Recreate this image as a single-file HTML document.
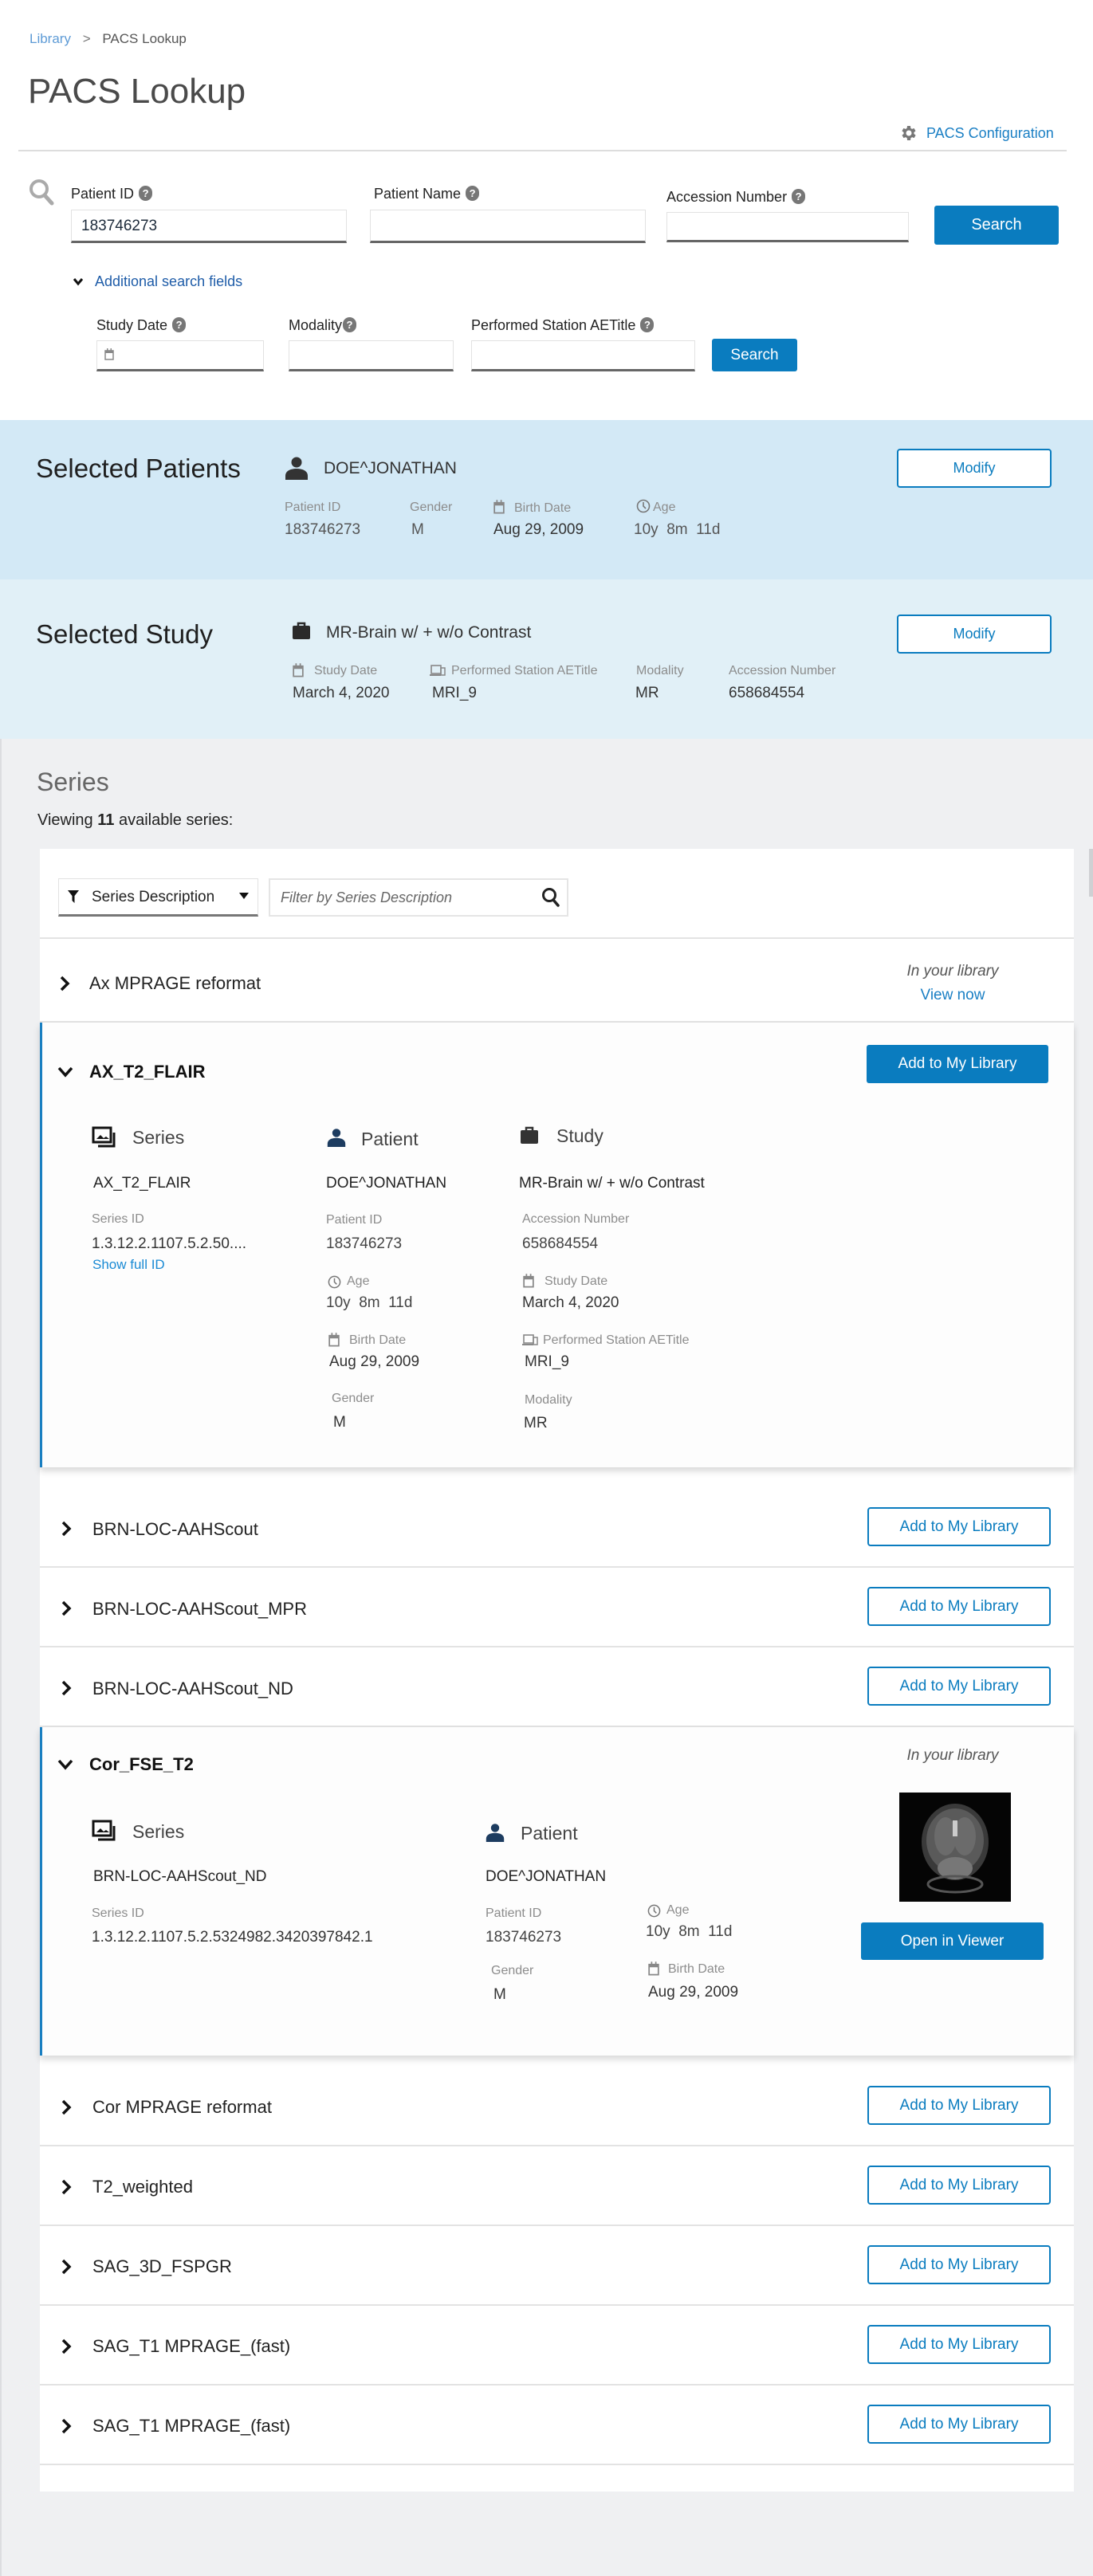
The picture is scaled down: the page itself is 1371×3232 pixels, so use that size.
<!DOCTYPE html>
<html><head><meta charset="utf-8">
<style>
*{box-sizing:border-box;margin:0;padding:0}
body{width:1371px;height:3232px;position:relative;background:#fff;font-family:"Liberation Sans",sans-serif;color:#222;overflow:hidden}
.a{position:absolute;white-space:nowrap}
.inp{position:absolute;background:#fff;border:1px solid #e2e2e2;border-bottom:3px solid #666}
.btn{position:absolute;background:#0a7cbf;color:#fff;border-radius:3px;font-size:19px;display:flex;align-items:center;justify-content:center}
.obtn{position:absolute;background:#fff;color:#0a7cbf;border:2px solid #0a7cbf;border-radius:4px;font-size:19px;display:flex;align-items:center;justify-content:center}
.lbl{font-size:16px;color:#8c8c8c;line-height:20px}
.val{font-size:19px;color:#333;line-height:22px}
.q{display:inline-block;width:17px;height:19px;border-radius:9px;background:#777;color:#fff;font-size:13px;font-weight:bold;text-align:center;line-height:19px;vertical-align:2px;margin-left:6px}
.sep{position:absolute;left:50px;width:1297px;height:2px;background:#e3e3e3}
.rt{font-size:22px;color:#222;line-height:26px}
</style></head><body>

<!-- header -->
<div class="a" style="left:37px;top:39px;font-size:17px;line-height:20px;color:#5e9bd6">Library <span style="color:#777;margin:0 10px">&gt;</span> <span style="color:#555">PACS Lookup</span></div>
<div class="a" style="left:35px;top:88px;font-size:44px;line-height:54px;color:#4a4a4a">PACS Lookup</div>
<svg class="a" style="left:1127px;top:155px" width="24" height="24" viewBox="0 0 24 24"><path fill="#777" d="M19.4 13a7.5 7.5 0 000-2l2.1-1.6-2-3.5-2.5 1a7 7 0 00-1.7-1L15 3h-4l-.4 2.9a7 7 0 00-1.7 1l-2.5-1-2 3.5L6.6 11a7.5 7.5 0 000 2l-2.1 1.6 2 3.5 2.5-1a7 7 0 001.7 1L11 21h4l.4-2.9a7 7 0 001.7-1l2.5 1 2-3.5zM13 15.5A3.5 3.5 0 1113 8.5a3.5 3.5 0 010 7z"/></svg>
<div class="a" style="left:1162px;top:156px;font-size:18px;line-height:22px;color:#1a7fc4">PACS Configuration</div>
<div class="a" style="left:23px;top:188px;width:1315px;height:2px;background:#ddd"></div>

<!-- search row -->
<svg class="a" style="left:35px;top:224px" width="34" height="34" viewBox="0 0 34 34"><circle cx="14" cy="13" r="10" fill="none" stroke="#aaa" stroke-width="4"/><path d="M21 21l9 10" stroke="#aaa" stroke-width="5" stroke-linecap="round"/></svg>
<div class="a" style="left:89px;top:231px;font-size:18px;line-height:24px">Patient ID<span class="q">?</span></div>
<div class="a" style="left:469px;top:231px;font-size:18px;line-height:24px">Patient Name<span class="q">?</span></div>
<div class="a" style="left:836px;top:235px;font-size:18px;line-height:24px">Accession Number<span class="q">?</span></div>
<div class="inp" style="left:89px;top:263px;width:346px;height:42px"><span class="a" style="left:12px;top:9px;font-size:19px;color:#1c2a3a">183746273</span></div>
<div class="inp" style="left:464px;top:263px;width:346px;height:42px"></div>
<div class="inp" style="left:836px;top:266px;width:304px;height:38px"></div>
<div class="btn" style="left:1172px;top:258px;width:156px;height:49px;font-size:20px">Search</div>

<svg class="a" style="left:91px;top:347px" width="14" height="12" viewBox="0 0 14 12"><path d="M2 3l5 6 5-6" fill="none" stroke="#111" stroke-width="3"/></svg>
<div class="a" style="left:119px;top:342px;font-size:18px;line-height:22px;color:#1e5ca8">Additional search fields</div>

<div class="a" style="left:121px;top:396px;font-size:18px;line-height:24px">Study Date<span class="q">?</span></div>
<div class="a" style="left:362px;top:396px;font-size:18px;line-height:24px">Modality<span class="q" style="margin-left:1px">?</span></div>
<div class="a" style="left:591px;top:396px;font-size:18px;line-height:24px">Performed Station AETitle<span class="q">?</span></div>
<div class="inp" style="left:121px;top:427px;width:210px;height:39px"><svg class="a" style="left:9px;top:9px" width="12" height="15" viewBox="0 0 12 15"><rect x="1" y="3" width="10" height="11" fill="none" stroke="#888" stroke-width="1.5"/><rect x="1" y="3" width="10" height="3" fill="#888"/><rect x="3" y="0" width="1.5" height="4" fill="#888"/><rect x="7.5" y="0" width="1.5" height="4" fill="#888"/></svg></div>
<div class="inp" style="left:362px;top:427px;width:207px;height:39px"></div>
<div class="inp" style="left:591px;top:427px;width:281px;height:39px"></div>
<div class="btn" style="left:893px;top:425px;width:107px;height:41px;font-size:19px">Search</div>

<!-- selected patients -->
<div class="a" style="left:0;top:527px;width:1371px;height:200px;background:#d3e9f6"></div>
<div class="a" style="left:45px;top:568px;font-size:33px;line-height:40px;color:#1f1f1f">Selected Patients</div>
<svg class="a" style="left:357px;top:572px" width="30" height="30" viewBox="0 0 30 30"><circle cx="15" cy="8" r="6.5" fill="#333"/><path d="M1 30v-5c0-6 6-9 14-9s14 3 14 9v5z" fill="#333"/></svg>
<div class="a" style="left:406px;top:575px;font-size:21px;line-height:26px;color:#333">DOE^JONATHAN</div>
<div class="a lbl" style="left:357px;top:627px">Patient ID</div>
<div class="a lbl" style="left:514px;top:627px">Gender</div>
<svg class="a" style="left:619px;top:627px" width="14" height="18" viewBox="0 0 12 15"><rect x="1" y="3" width="10" height="11" fill="none" stroke="#888" stroke-width="1.5"/><rect x="1" y="3" width="10" height="3" fill="#888"/><rect x="3" y="0" width="1.5" height="4" fill="#888"/><rect x="7.5" y="0" width="1.5" height="4" fill="#888"/></svg>
<div class="a lbl" style="left:645px;top:628px">Birth Date</div>
<svg class="a" style="left:798px;top:626px" width="18" height="18" viewBox="0 0 18 18"><circle cx="9" cy="9" r="7.5" fill="none" stroke="#777" stroke-width="1.6"/><path d="M9 4v5l3 3" fill="none" stroke="#777" stroke-width="1.6"/></svg>
<div class="a lbl" style="left:819px;top:627px">Age</div>
<div class="a val" style="left:357px;top:654px;color:#555">183746273</div>
<div class="a val" style="left:516px;top:654px;color:#555">M</div>
<div class="a val" style="left:619px;top:654px">Aug 29, 2009</div>
<div class="a val" style="left:795px;top:654px;color:#555">10y&nbsp; 8m&nbsp; 11d</div>
<div class="obtn" style="left:1125px;top:563px;width:194px;height:49px;font-size:18px">Modify</div>

<!-- selected study -->
<div class="a" style="left:0;top:727px;width:1371px;height:200px;background:#e1f0f7"></div>
<div class="a" style="left:45px;top:776px;font-size:33px;line-height:40px;color:#1f1f1f">Selected Study</div>
<svg class="a" style="left:366px;top:779px" width="24" height="24" viewBox="0 0 24 24"><rect x="1" y="6" width="22" height="17" rx="2" fill="#2a2a2a"/><path d="M8 6V3h8v3" fill="none" stroke="#2a2a2a" stroke-width="2.5"/></svg>
<div class="a" style="left:409px;top:781px;font-size:21px;line-height:26px;color:#333">MR-Brain w/ + w/o Contrast</div>
<svg class="a" style="left:367px;top:832px" width="14" height="18" viewBox="0 0 12 15"><rect x="1" y="3" width="10" height="11" fill="none" stroke="#888" stroke-width="1.5"/><rect x="1" y="3" width="10" height="3" fill="#888"/><rect x="3" y="0" width="1.5" height="4" fill="#888"/><rect x="7.5" y="0" width="1.5" height="4" fill="#888"/></svg>
<div class="a lbl" style="left:394px;top:832px">Study Date</div>
<svg class="a" style="left:539px;top:834px" width="20" height="15" viewBox="0 0 20 15"><rect x="2" y="1" width="12" height="10" fill="none" stroke="#888" stroke-width="1.6"/><path d="M0 13h14" stroke="#888" stroke-width="2"/><rect x="14" y="4" width="5" height="9" fill="none" stroke="#888" stroke-width="1.5"/></svg>
<div class="a lbl" style="left:566px;top:832px">Performed Station AETitle</div>
<div class="a lbl" style="left:798px;top:832px">Modality</div>
<div class="a lbl" style="left:914px;top:832px">Accession Number</div>
<div class="a val" style="left:367px;top:859px">March 4, 2020</div>
<div class="a val" style="left:542px;top:859px">MRI_9</div>
<div class="a val" style="left:797px;top:859px">MR</div>
<div class="a val" style="left:914px;top:859px">658684554</div>
<div class="obtn" style="left:1125px;top:771px;width:194px;height:49px;font-size:18px">Modify</div>

<!-- series area -->
<div class="a" style="left:0;top:927px;width:1371px;height:2305px;background:#eff0f2;border-left:2px solid #dcdde0"></div>
<div class="a" style="left:46px;top:962px;font-size:32px;line-height:38px;color:#666">Series</div>
<div class="a" style="left:47px;top:1017px;font-size:20px;line-height:24px;color:#222">Viewing <b>11</b> available series:</div>
<div class="a" style="left:1366px;top:1065px;width:5px;height:60px;background:#cfd0d3"></div>

<div class="a" style="left:50px;top:1065px;width:1297px;height:2061px;background:#fff"></div>
<div class="a" style="left:73px;top:1102px;width:251px;height:48px;border:1px solid #e2e2e2;border-bottom:3px solid #777"></div>
<svg class="a" style="left:85px;top:1117px" width="14" height="16" viewBox="0 0 14 16"><path d="M0 0h14L8.5 7v9L5.5 13V7z" fill="#111"/></svg>
<div class="a" style="left:115px;top:1114px;font-size:19px;line-height:24px;color:#222">Series Description</div>
<svg class="a" style="left:300px;top:1120px" width="12" height="8" viewBox="0 0 12 8"><path d="M0 0h12L6 8z" fill="#111"/></svg>
<div class="a" style="left:337px;top:1102px;width:376px;height:48px;border:2px solid #e5e5e5"></div>
<div class="a" style="left:352px;top:1114px;font-size:18px;line-height:24px;color:#666;font-style:italic">Filter by Series Description</div>
<svg class="a" style="left:679px;top:1113px" width="24" height="26" viewBox="0 0 24 26"><circle cx="10" cy="10" r="7.5" fill="none" stroke="#222" stroke-width="3"/><path d="M15 16l6 7" stroke="#222" stroke-width="3.5" stroke-linecap="round"/></svg>
<div class="sep" style="top:1176px"></div>

<!-- Ax MPRAGE -->
<svg class="a" style="left:74px;top:1224px" width="14" height="20" viewBox="0 0 14 20"><path d="M3 2l8 8-8 8" fill="none" stroke="#111" stroke-width="3.5"/></svg>
<div class="a rt" style="left:112px;top:1221px">Ax MPRAGE reformat</div>
<div class="a" style="left:1135px;top:1207px;width:120px;text-align:center;font-size:19px;line-height:24px;color:#555;font-style:italic">In your library</div>
<div class="a" style="left:1135px;top:1237px;width:120px;text-align:center;font-size:19px;line-height:24px;color:#1a7fc4">View now</div>
<div class="sep" style="top:1281px"></div>

<!-- AX_T2_FLAIR expanded -->
<div class="a" style="left:50px;top:1283px;width:1297px;height:558px;background:#fdfdfd;border-left:3px solid #1a7fc1;box-shadow:0 5px 8px rgba(0,0,0,.15)"></div>
<svg class="a" style="left:72px;top:1337px" width="20" height="16" viewBox="0 0 20 16"><path d="M2 3l8 9 8-9" fill="none" stroke="#111" stroke-width="3.5"/></svg>
<div class="a" style="left:112px;top:1331px;font-size:22px;line-height:28px;font-weight:bold;color:#111">AX_T2_FLAIR</div>
<div class="btn" style="left:1087px;top:1311px;width:228px;height:48px">Add to My Library</div>

<svg class="a" style="left:115px;top:1413px" width="34" height="30" viewBox="0 0 34 30"><rect x="2" y="2" width="22" height="18" fill="none" stroke="#111" stroke-width="3"/><path d="M28 8v17H8" fill="none" stroke="#111" stroke-width="3"/><path d="M6 16l5-5 4 4 3-2 4 3z" fill="#111"/></svg>
<div class="a" style="left:166px;top:1413px;font-size:23px;line-height:28px;color:#444">Series</div>
<svg class="a" style="left:410px;top:1414px" width="24" height="26" viewBox="0 0 30 30"><circle cx="15" cy="8" r="6.5" fill="#1d3c60"/><path d="M1 30v-5c0-6 6-9 14-9s14 3 14 9v5z" fill="#1d3c60"/></svg>
<div class="a" style="left:453px;top:1415px;font-size:23px;line-height:28px;color:#444">Patient</div>
<svg class="a" style="left:652px;top:1412px" width="24" height="24" viewBox="0 0 24 24"><rect x="1" y="6" width="22" height="17" rx="2" fill="#333"/><path d="M8 6V3h8v3" fill="none" stroke="#333" stroke-width="2.5"/></svg>
<div class="a" style="left:698px;top:1411px;font-size:23px;line-height:28px;color:#444">Study</div>

<div class="a val" style="left:117px;top:1474px;color:#222">AX_T2_FLAIR</div>
<div class="a val" style="left:409px;top:1474px;color:#222">DOE^JONATHAN</div>
<div class="a val" style="left:651px;top:1474px;color:#222">MR-Brain w/ + w/o Contrast</div>

<div class="a lbl" style="left:115px;top:1520px">Series ID</div>
<div class="a val" style="left:115px;top:1550px">1.3.12.2.1107.5.2.50....</div>
<div class="a" style="left:116px;top:1577px;font-size:17px;line-height:20px;color:#1a8ad4">Show full ID</div>

<div class="a lbl" style="left:409px;top:1521px">Patient ID</div>
<div class="a val" style="left:409px;top:1550px;color:#444">183746273</div>
<svg class="a" style="left:411px;top:1600px" width="17" height="17" viewBox="0 0 18 18"><circle cx="9" cy="9" r="7.5" fill="none" stroke="#777" stroke-width="1.6"/><path d="M9 4v5l3 3" fill="none" stroke="#777" stroke-width="1.6"/></svg>
<div class="a lbl" style="left:435px;top:1598px">Age</div>
<div class="a val" style="left:409px;top:1624px;color:#444">10y&nbsp; 8m&nbsp; 11d</div>
<svg class="a" style="left:412px;top:1672px" width="14" height="18" viewBox="0 0 12 15"><rect x="1" y="3" width="10" height="11" fill="none" stroke="#888" stroke-width="1.5"/><rect x="1" y="3" width="10" height="3" fill="#888"/><rect x="3" y="0" width="1.5" height="4" fill="#888"/><rect x="7.5" y="0" width="1.5" height="4" fill="#888"/></svg>
<div class="a lbl" style="left:438px;top:1672px">Birth Date</div>
<div class="a val" style="left:413px;top:1698px">Aug 29, 2009</div>
<div class="a lbl" style="left:416px;top:1745px">Gender</div>
<div class="a val" style="left:418px;top:1774px">M</div>

<div class="a lbl" style="left:655px;top:1520px">Accession Number</div>
<div class="a val" style="left:655px;top:1550px;color:#444">658684554</div>
<svg class="a" style="left:656px;top:1598px" width="14" height="18" viewBox="0 0 12 15"><rect x="1" y="3" width="10" height="11" fill="none" stroke="#888" stroke-width="1.5"/><rect x="1" y="3" width="10" height="3" fill="#888"/><rect x="3" y="0" width="1.5" height="4" fill="#888"/><rect x="7.5" y="0" width="1.5" height="4" fill="#888"/></svg>
<div class="a lbl" style="left:683px;top:1598px">Study Date</div>
<div class="a val" style="left:655px;top:1624px">March 4, 2020</div>
<svg class="a" style="left:655px;top:1674px" width="20" height="15" viewBox="0 0 20 15"><rect x="2" y="1" width="12" height="10" fill="none" stroke="#888" stroke-width="1.6"/><path d="M0 13h14" stroke="#888" stroke-width="2"/><rect x="14" y="4" width="5" height="9" fill="none" stroke="#888" stroke-width="1.5"/></svg>
<div class="a lbl" style="left:681px;top:1672px">Performed Station AETitle</div>
<div class="a val" style="left:658px;top:1698px">MRI_9</div>
<div class="a lbl" style="left:658px;top:1747px">Modality</div>
<div class="a val" style="left:657px;top:1775px">MR</div>

<!-- collapsed rows 1 -->
<svg class="a" style="left:76px;top:1908px" width="14" height="20" viewBox="0 0 14 20"><path d="M3 2l8 8-8 8" fill="none" stroke="#111" stroke-width="3.5"/></svg>
<div class="a rt" style="left:116px;top:1906px">BRN-LOC-AAHScout</div>
<div class="obtn" style="left:1088px;top:1891px;width:230px;height:49px">Add to My Library</div>
<div class="sep" style="top:1965px"></div>
<svg class="a" style="left:76px;top:2008px" width="14" height="20" viewBox="0 0 14 20"><path d="M3 2l8 8-8 8" fill="none" stroke="#111" stroke-width="3.5"/></svg>
<div class="a rt" style="left:116px;top:2006px">BRN-LOC-AAHScout_MPR</div>
<div class="obtn" style="left:1088px;top:1991px;width:230px;height:49px">Add to My Library</div>
<div class="sep" style="top:2065px"></div>
<svg class="a" style="left:76px;top:2108px" width="14" height="20" viewBox="0 0 14 20"><path d="M3 2l8 8-8 8" fill="none" stroke="#111" stroke-width="3.5"/></svg>
<div class="a rt" style="left:116px;top:2106px">BRN-LOC-AAHScout_ND</div>
<div class="obtn" style="left:1088px;top:2091px;width:230px;height:49px">Add to My Library</div>
<div class="sep" style="top:2165px"></div>

<!-- Cor_FSE_T2 expanded -->
<div class="a" style="left:50px;top:2167px;width:1297px;height:412px;background:#fdfdfd;border-left:3px solid #1a7fc1;box-shadow:0 5px 8px rgba(0,0,0,.15)"></div>
<svg class="a" style="left:72px;top:2206px" width="20" height="16" viewBox="0 0 20 16"><path d="M2 3l8 9 8-9" fill="none" stroke="#111" stroke-width="3.5"/></svg>
<div class="a" style="left:112px;top:2200px;font-size:22px;line-height:28px;font-weight:bold;color:#111">Cor_FSE_T2</div>
<div class="a" style="left:1135px;top:2191px;width:120px;text-align:center;font-size:19px;line-height:24px;color:#555;font-style:italic">In your library</div>
<svg class="a" style="left:1128px;top:2249px" width="140" height="137" viewBox="0 0 140 137"><rect width="140" height="137" fill="#050505"/><ellipse cx="70" cy="62" rx="42" ry="48" fill="#3a3a3a"/><ellipse cx="70" cy="60" rx="36" ry="40" fill="#5a5a5a"/><ellipse cx="58" cy="55" rx="14" ry="24" fill="#6b6b6b"/><ellipse cx="82" cy="55" rx="14" ry="24" fill="#6b6b6b"/><ellipse cx="70" cy="95" rx="22" ry="14" fill="#777"/><rect x="67" y="35" width="6" height="20" fill="#ccc"/><ellipse cx="70" cy="115" rx="34" ry="10" fill="none" stroke="#555" stroke-width="3"/></svg>
<div class="btn" style="left:1080px;top:2412px;width:229px;height:47px">Open in Viewer</div>

<svg class="a" style="left:115px;top:2283px" width="34" height="30" viewBox="0 0 34 30"><rect x="2" y="2" width="22" height="18" fill="none" stroke="#111" stroke-width="3"/><path d="M28 8v17H8" fill="none" stroke="#111" stroke-width="3"/><path d="M6 16l5-5 4 4 3-2 4 3z" fill="#111"/></svg>
<div class="a" style="left:166px;top:2284px;font-size:23px;line-height:28px;color:#444">Series</div>
<svg class="a" style="left:609px;top:2286px" width="24" height="26" viewBox="0 0 30 30"><circle cx="15" cy="8" r="6.5" fill="#1d3c60"/><path d="M1 30v-5c0-6 6-9 14-9s14 3 14 9v5z" fill="#1d3c60"/></svg>
<div class="a" style="left:653px;top:2286px;font-size:23px;line-height:28px;color:#444">Patient</div>
<div class="a val" style="left:117px;top:2344px;color:#222">BRN-LOC-AAHScout_ND</div>
<div class="a val" style="left:609px;top:2344px;color:#222">DOE^JONATHAN</div>
<div class="a lbl" style="left:115px;top:2391px">Series ID</div>
<div class="a val" style="left:115px;top:2420px">1.3.12.2.1107.5.2.5324982.3420397842.1</div>
<div class="a lbl" style="left:609px;top:2391px">Patient ID</div>
<div class="a val" style="left:609px;top:2420px;color:#444">183746273</div>
<svg class="a" style="left:812px;top:2389px" width="17" height="17" viewBox="0 0 18 18"><circle cx="9" cy="9" r="7.5" fill="none" stroke="#777" stroke-width="1.6"/><path d="M9 4v5l3 3" fill="none" stroke="#777" stroke-width="1.6"/></svg>
<div class="a lbl" style="left:836px;top:2387px">Age</div>
<div class="a val" style="left:810px;top:2413px;color:#444">10y&nbsp; 8m&nbsp; 11d</div>
<div class="a lbl" style="left:616px;top:2463px">Gender</div>
<div class="a val" style="left:619px;top:2492px">M</div>
<svg class="a" style="left:813px;top:2461px" width="14" height="18" viewBox="0 0 12 15"><rect x="1" y="3" width="10" height="11" fill="none" stroke="#888" stroke-width="1.5"/><rect x="1" y="3" width="10" height="3" fill="#888"/><rect x="3" y="0" width="1.5" height="4" fill="#888"/><rect x="7.5" y="0" width="1.5" height="4" fill="#888"/></svg>
<div class="a lbl" style="left:838px;top:2461px">Birth Date</div>
<div class="a val" style="left:813px;top:2489px">Aug 29, 2009</div>

<!-- collapsed rows 2 -->
<svg class="a" style="left:76px;top:2634px" width="14" height="20" viewBox="0 0 14 20"><path d="M3 2l8 8-8 8" fill="none" stroke="#111" stroke-width="3.5"/></svg>
<div class="a rt" style="left:116px;top:2631px">Cor MPRAGE reformat</div>
<div class="obtn" style="left:1088px;top:2617px;width:230px;height:49px">Add to My Library</div>
<div class="sep" style="top:2691px"></div>
<svg class="a" style="left:76px;top:2734px" width="14" height="20" viewBox="0 0 14 20"><path d="M3 2l8 8-8 8" fill="none" stroke="#111" stroke-width="3.5"/></svg>
<div class="a rt" style="left:116px;top:2731px">T2_weighted</div>
<div class="obtn" style="left:1088px;top:2717px;width:230px;height:49px">Add to My Library</div>
<div class="sep" style="top:2791px"></div>
<svg class="a" style="left:76px;top:2834px" width="14" height="20" viewBox="0 0 14 20"><path d="M3 2l8 8-8 8" fill="none" stroke="#111" stroke-width="3.5"/></svg>
<div class="a rt" style="left:116px;top:2831px">SAG_3D_FSPGR</div>
<div class="obtn" style="left:1088px;top:2817px;width:230px;height:49px">Add to My Library</div>
<div class="sep" style="top:2891px"></div>
<svg class="a" style="left:76px;top:2934px" width="14" height="20" viewBox="0 0 14 20"><path d="M3 2l8 8-8 8" fill="none" stroke="#111" stroke-width="3.5"/></svg>
<div class="a rt" style="left:116px;top:2931px">SAG_T1 MPRAGE_(fast)</div>
<div class="obtn" style="left:1088px;top:2917px;width:230px;height:49px">Add to My Library</div>
<div class="sep" style="top:2991px"></div>
<svg class="a" style="left:76px;top:3034px" width="14" height="20" viewBox="0 0 14 20"><path d="M3 2l8 8-8 8" fill="none" stroke="#111" stroke-width="3.5"/></svg>
<div class="a rt" style="left:116px;top:3031px">SAG_T1 MPRAGE_(fast)</div>
<div class="obtn" style="left:1088px;top:3017px;width:230px;height:49px">Add to My Library</div>
<div class="sep" style="top:3091px"></div>

</body></html>
